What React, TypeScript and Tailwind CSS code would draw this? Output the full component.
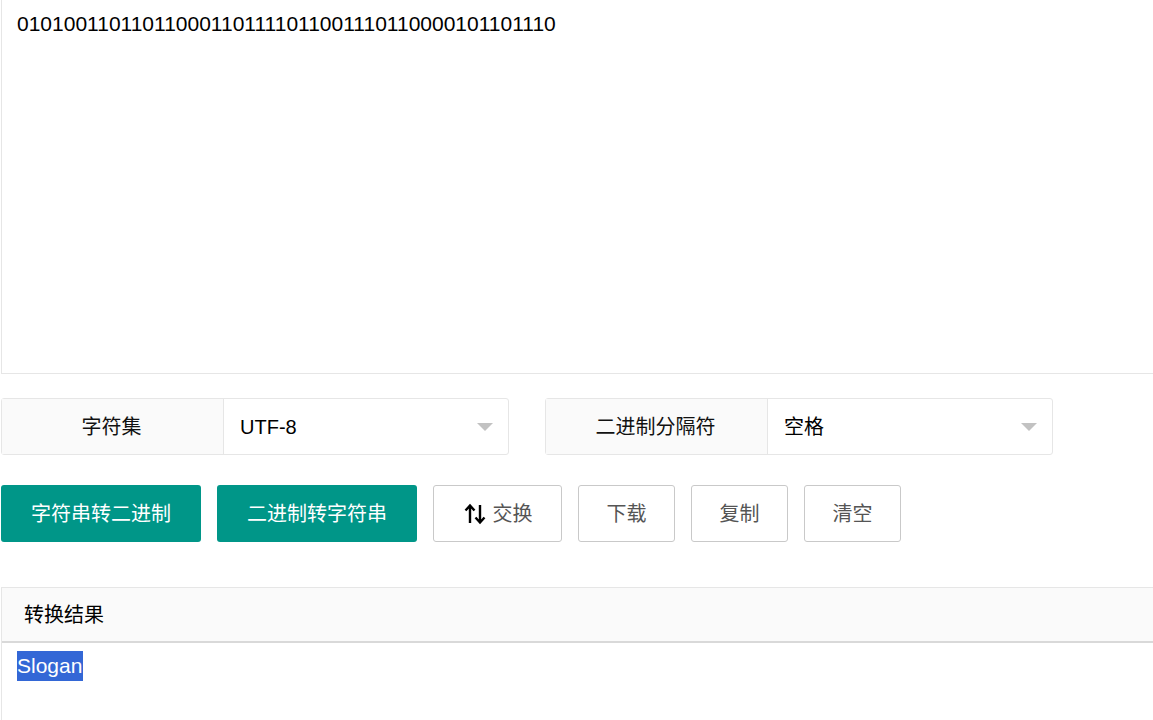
import React from 'react';

const cjk = { fontFamily: '"Liberation Sans", "Noto Sans CJK SC", sans-serif' };

function SelectBox({ label, value }: { label: string; value: string }) {
  return (
    <div className="flex h-[57px] w-[508px] rounded-[3px] border border-[#e6e6e6] bg-white">
      <div className="flex w-[222px] items-center justify-center border-r border-[#e6e6e6] bg-[#fafafa] pr-[2px] text-[20px] text-[#111]">
        {label}
      </div>
      <div className="relative flex flex-1 items-center pl-[16px] text-[20px] text-black">
        <span className="mt-[1px]">{value}</span>
        <span className="absolute right-[15px] top-[24px] h-0 w-0 border-x-[8px] border-t-[8px] border-x-transparent border-t-[#c2c2c2]" />
      </div>
    </div>
  );
}

function SwapIcon() {
  return (
    <svg width="24" height="22" viewBox="0 0 24 22" className="mr-[6px]">
      <path d="M7 20V3M2.5 7.5L7 2.5l4.5 5" stroke="#000" strokeWidth="2.4" fill="none" />
      <path d="M17 2v17M12.5 14.5L17 19.5l4.5-5" stroke="#000" strokeWidth="2.4" fill="none" />
    </svg>
  );
}

export default function App() {
  const primary = 'flex h-[57px] items-center justify-center rounded-[3px] bg-[#009688] text-[20px] text-white';
  const plain = 'flex h-[57px] items-center justify-center rounded-[3px] border border-[#c9c9c9] bg-white text-[20px] text-[#555]';

  return (
    <div className="h-[720px] w-[1153px] overflow-hidden bg-white" style={cjk}>
      <div className="w-[1220px] pl-px">
        {/* input area */}
        <div className="h-[374px] border-x border-b border-[#e6e6e6] px-[15px] pt-[10px] text-[21px] leading-[28px] text-black">
          010100110110110001101111011001110110000101101110
        </div>

        {/* selects */}
        <div className="mt-[24px] flex gap-[36px]">
          <SelectBox label="字符集" value="UTF-8" />
          <SelectBox label="二进制分隔符" value="空格" />
        </div>

        {/* buttons */}
        <div className="mt-[30px] flex gap-[16px]">
          <button className={`${primary} w-[200px]`}>字符串转二进制</button>
          <button className={`${primary} w-[200px]`}>二进制转字符串</button>
          <button className={`${plain} w-[129px]`}>
            <SwapIcon />
            交换
          </button>
          <button className={`${plain} w-[97px]`}>下载</button>
          <button className={`${plain} w-[97px]`}>复制</button>
          <button className={`${plain} w-[97px]`}>清空</button>
        </div>

        {/* result */}
        <div className="mt-[45px] border border-b-0 border-[#e6e6e6]">
          <div className="flex h-[55px] items-center border-b-2 border-[#d9d9d9] bg-[#fafafa] px-[22px] text-[20px] text-black">
            转换结果
          </div>
          <div className="h-[100px] px-[15px] pt-[8px] text-[21px] leading-[30px]">
            <span className="inline-block h-[30px] bg-[#3367d6] pr-px text-white">Slogan</span>
          </div>
        </div>
      </div>
    </div>
  );
}
